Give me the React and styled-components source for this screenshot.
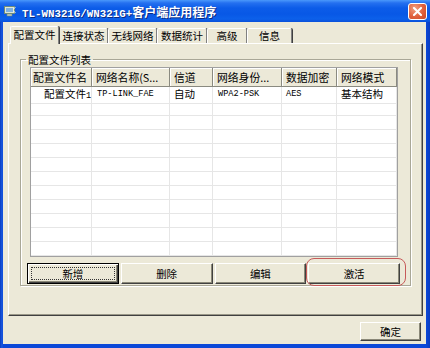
import React from "react";
import styled, { createGlobalStyle, css } from "styled-components";

const GlobalStyle = createGlobalStyle`
  html, body { margin: 0; padding: 0; background: #0b45d3; }
  body {
    width: 430px; height: 348px; overflow: hidden;
    font-family: "Noto Sans CJK SC", "Liberation Sans", sans-serif;
    color: #000;
  }
`;

const Window = styled.div`
  width: 430px;
  height: 348px;
  box-sizing: border-box;
  display: flex;
  flex-direction: column;
  background: linear-gradient(90deg, #0a3cc0 0px, #1a5ae0 2px, #0b48d8 3px, #0b48d8 calc(100% - 4px), #0a3cc0 100%);
`;

const TitleBar = styled.div`
  height: 22px;
  flex: none;
  display: flex;
  align-items: center;
  gap: 6px;
  padding: 0 3px 0 4px;
  background: linear-gradient(180deg, #4a98fb 0px, #2470f0 3px, #0c5ce8 8px, #0858e6 14px, #0c60ea 19px, #0a50da 22px);
`;

const Title = styled.div`
  flex: 1;
  color: #fff;
  font-weight: bold;
  white-space: nowrap;
  text-shadow: 1px 1px 0 #0a2a80;
  display: flex;
  align-items: baseline;
`;

const TitleLatin = styled.span`
  font-family: "Liberation Mono", monospace;
  font-size: 10.8px;
  font-weight: bold;
`;

const TitleCjk = styled.span`
  font-family: "Noto Sans CJK SC", sans-serif;
  font-size: 12px;
  font-weight: bold;
`;

const CloseButton = styled.div`
  width: 19px;
  height: 17px;
  box-sizing: border-box;
  border: 1px solid #fff;
  border-radius: 3px;
  background: radial-gradient(circle at 35% 30%, #f0a080 0%, #e0603c 55%, #c84a28 100%);
  display: flex;
  align-items: center;
  justify-content: center;
`;

const Client = styled.div`
  flex: 1;
  margin: 0 4px 4px 3px;
  background: #ece9d8;
  padding: 4px 3px 0 5px;
  display: flex;
  flex-direction: column;
`;

const TabStrip = styled.div`
  display: flex;
  align-items: flex-end;
  height: 18px;
  margin: 0 0 -1px 2px;
  position: relative;
  z-index: 1;
`;

const Tab = styled.div`
  width: ${(p) => p.$w}px;
  box-sizing: border-box;
  height: 15px;
  margin-bottom: 1px;
  border-top: 1px solid #fff;
  border-left: 1px solid #fff;
  border-right: 1px solid #808080;
  box-shadow: 1px 0 0 #404040;
  border-radius: 2px 2px 0 0;
  background: #ece9d8;
  font-size: 10.5px;
  line-height: 14px;
  text-align: center;
  white-space: nowrap;
  ${(p) =>
    p.$active &&
    css`
      height: 18px;
      margin-bottom: 0;
      line-height: 16px;
      position: relative;
    `}
`;

const Panel = styled.div`
  height: 273px;
  box-sizing: border-box;
  border: 1px solid;
  border-color: #fff #404040 #404040 #fff;
  box-shadow: inset -1px -1px 0 #9a9888;
  background: #ece9d8;
  padding: 8px 11px 0 11px;
`;

const GroupBox = styled.fieldset`
  margin: 0;
  padding: 0 10px 1px 6px;
  min-width: 0;
  border: 1px solid #a9a797;
  box-shadow: inset 1px 1px 0 #fff, 1px 1px 0 #fff;
`;

const Legend = styled.legend`
  padding: 0 2px;
  margin-left: -1px;
  font-size: 10.5px;
  line-height: 15px;
`;

const COLS = "61px 78px 43px 69px 55px 60px";

const ListView = styled.div`
  margin: 0 2px 0 3px;
  background: #fff;
  border: 1px solid #a0a0a0;
`;

const HeaderRow = styled.div`
  display: grid;
  grid-template-columns: ${COLS};
  height: 19px;
`;

const HeaderCell = styled.div`
  box-sizing: border-box;
  background: #ece9d8;
  border-right: 1px solid #8a8a80;
  border-bottom: 1px solid #8a8a80;
  box-shadow: inset 1px 1px 0 #fff;
  padding-left: ${(p) => (p.$first ? 2 : 4)}px;
  font-size: 10.8px;
  line-height: 18px;
  white-space: nowrap;
`;

const Row = styled.div`
  display: grid;
  grid-template-columns: ${COLS};
  height: ${(p) => (p.$tall ? 15 : 14)}px;
`;

const Cell = styled.div`
  box-sizing: border-box;
  border-right: 1px solid #e6e6e6;
  border-bottom: 1px solid #e6e6e6;
  padding-left: ${(p) => p.$indent || 4}px;
  white-space: nowrap;
  ${(p) =>
    p.$mono
      ? css`
          font-family: "Liberation Mono", monospace;
          font-size: 8.6px;
          line-height: 14px;
        `
      : css`
          font-size: 10.5px;
          line-height: 14px;
        `}
`;

const CellSub = styled.span`
  font-family: "Liberation Mono", monospace;
  font-size: 8.6px;
`;

const ButtonRow = styled.div`
  display: grid;
  grid-template-columns: repeat(4, 1fr);
  gap: 2px;
  margin-top: 6px;
`;

const Button = styled.div`
  position: relative;
  height: 21px;
  box-sizing: border-box;
  background: #ece9d8;
  border: 1px solid;
  border-color: #fff #404040 #404040 #fff;
  box-shadow: inset -1px -1px 0 #8a8878;
  font-size: 10.5px;
  line-height: 19px;
  text-align: center;
  ${(p) =>
    p.$default &&
    css`
      border: 1px solid #000;
      box-shadow: inset 1px 1px 0 #fff, inset -1px -1px 0 #404040, inset -2px -2px 0 #8a8878;
      &::before {
        content: "";
        position: absolute;
        inset: 3px;
        border: 1px dotted #333;
      }
    `}
  ${(p) =>
    p.$marked &&
    css`
      &::after {
        content: "";
        position: absolute;
        top: -6px;
        left: -3px;
        right: -7px;
        bottom: -3px;
        border: 1px solid #c65a5a;
        border-radius: 8px;
      }
    `}
`;

const Footer = styled.div`
  display: flex;
  justify-content: flex-end;
  padding: 6px 2px 0 0;
`;

const OkButton = styled(Button)`
  width: 61px;
  height: 19px;
  line-height: 17px;
`;

const AppIcon = () => (
  <svg width="12" height="12" viewBox="0 0 12 12">
    <rect x="0.5" y="1.5" width="10" height="7" fill="#dfe8d8" stroke="#6f8a7a" />
    <rect x="2" y="3" width="7" height="4" fill="#7fb0e0" />
    <rect x="3" y="9" width="5" height="2" fill="#c9d2c4" stroke="#6f8a7a" strokeWidth="0.6" />
    <path d="M9 4 L11.5 2.5 M9 6 L11.5 7.5" stroke="#e8f0e8" strokeWidth="1" />
  </svg>
);

const CloseIcon = () => (
  <svg width="9" height="9" viewBox="0 0 9 9">
    <path d="M1 1 L8 8 M8 1 L1 8" stroke="#fff" strokeWidth="2" strokeLinecap="square" />
  </svg>
);

const tabs = [
  { label: "配置文件", w: 49, active: true },
  { label: "连接状态", w: 49 },
  { label: "无线网络", w: 49 },
  { label: "数据统计", w: 50 },
  { label: "高级", w: 40 },
  { label: "信息", w: 45 },
];

const headers = ["配置文件名", "网络名称(S...", "信道", "网络身份...", "数据加密", "网络模式"];

const emptyRows = Array.from({ length: 11 });

export default function App() {
  return (
    <>
      <GlobalStyle />
      <Window>
        <TitleBar>
          <AppIcon />
          <Title>
            <TitleLatin>TL-WN321G/WN321G+</TitleLatin>
            <TitleCjk>客户端应用程序</TitleCjk>
          </Title>
          <CloseButton>
            <CloseIcon />
          </CloseButton>
        </TitleBar>
        <Client>
          <TabStrip>
            {tabs.map((t) => (
              <Tab key={t.label} $w={t.w} $active={t.active}>
                {t.label}
              </Tab>
            ))}
          </TabStrip>
          <Panel>
            <GroupBox>
              <Legend>配置文件列表</Legend>
              <ListView>
                <HeaderRow>
                  {headers.map((h, i) => (
                    <HeaderCell key={h} $first={i === 0}>
                      {h}
                    </HeaderCell>
                  ))}
                </HeaderRow>
                <Row $tall>
                  <Cell $indent={13}>
                    配置文件<CellSub>1</CellSub>
                  </Cell>
                  <Cell $mono $indent={5}>TP-LINK_FAE</Cell>
                  <Cell>自动</Cell>
                  <Cell $mono $indent={5}>WPA2-PSK</Cell>
                  <Cell $mono>AES</Cell>
                  <Cell>基本结构</Cell>
                </Row>
                {emptyRows.map((_, r) => (
                  <Row key={r}>
                    {headers.map((h) => (
                      <Cell key={h} />
                    ))}
                  </Row>
                ))}
              </ListView>
              <ButtonRow>
                <Button $default>新增</Button>
                <Button>删除</Button>
                <Button>编辑</Button>
                <Button $marked>激活</Button>
              </ButtonRow>
            </GroupBox>
          </Panel>
          <Footer>
            <OkButton>确定</OkButton>
          </Footer>
        </Client>
      </Window>
    </>
  );
}
